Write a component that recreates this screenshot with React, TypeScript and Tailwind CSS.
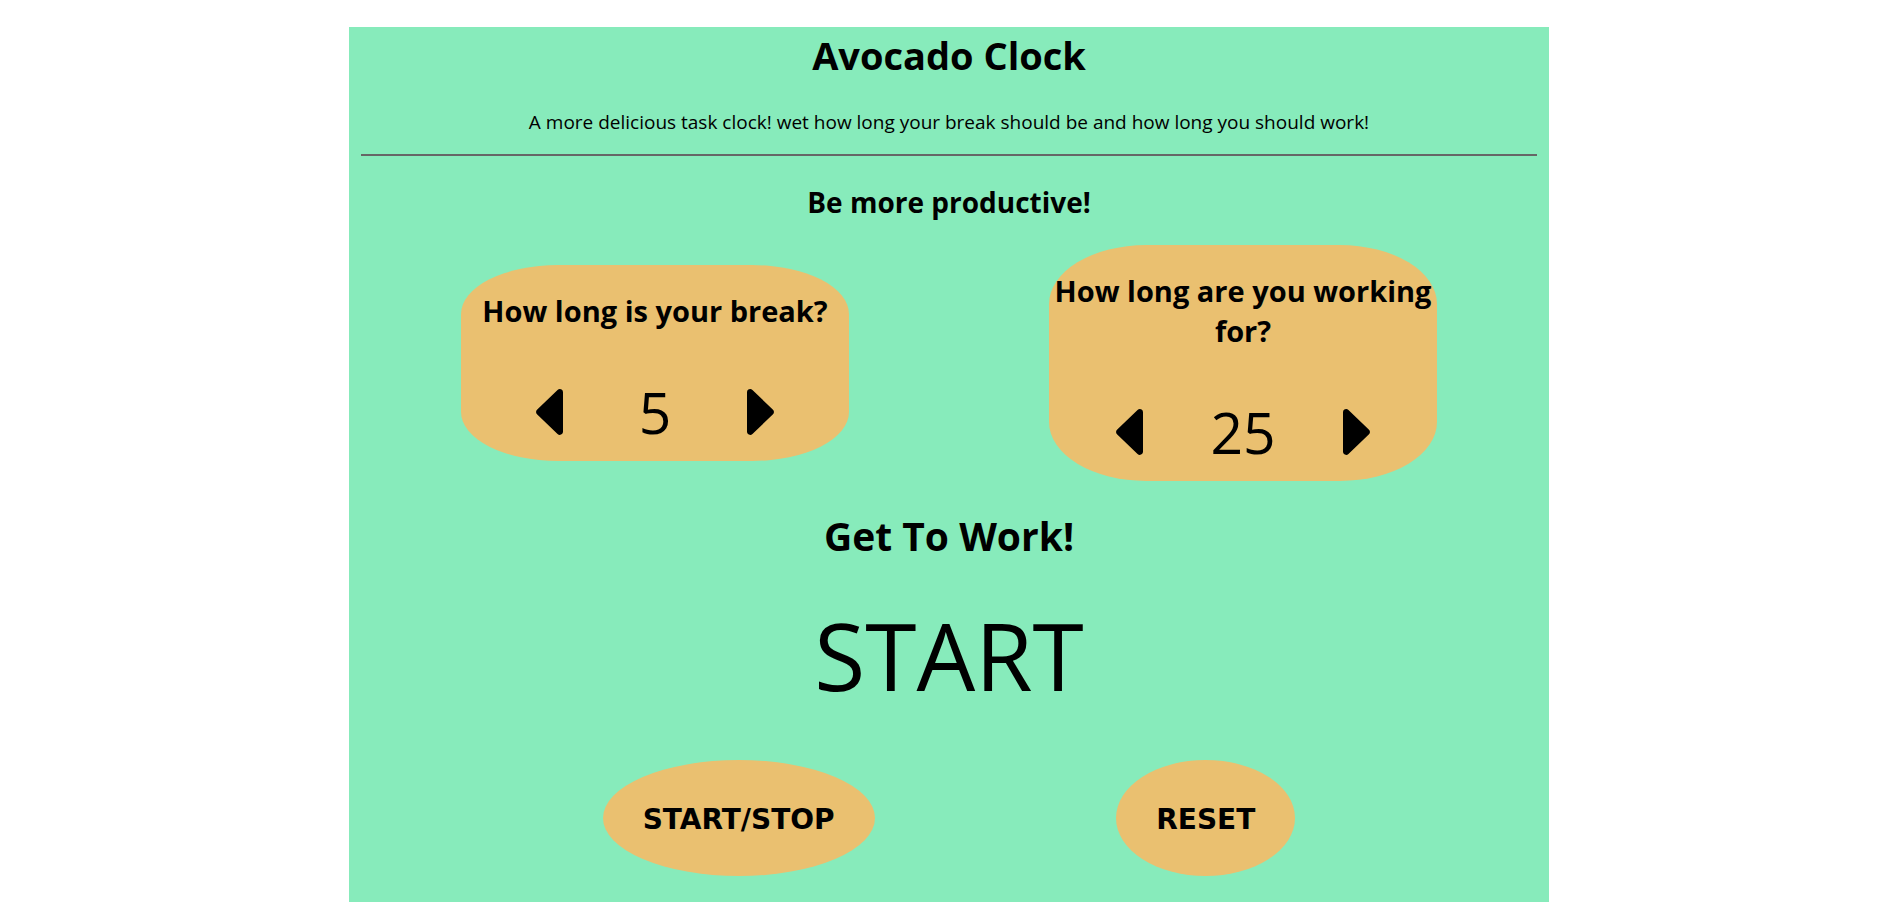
import { useState } from 'react';

const Caret = ({ dir }: { dir: 'left' | 'right' }) => (
  <svg
    viewBox="23 107 169 298"
    width="27"
    height="46"
    preserveAspectRatio="none"
    className={dir === 'right' ? 'rotate-180' : ''}
  >
    <path
      fill="currentColor"
      d="M192 127.338v257.324c0 17.818-21.543 26.741-34.142 14.142L29.196 270.142c-7.81-7.81-7.81-20.474 0-28.284l128.662-128.662c12.599-12.6 34.142-3.676 34.142 14.142z"
    />
  </svg>
);

type SetterProps = {
  label: string;
  value: number;
  onDec: () => void;
  onInc: () => void;
};

const Setter = ({ label, value, onDec, onInc }: SetterProps) => (
  <div className="w-[388px] rounded-[25%] bg-[#eac070] pt-[26px] pb-[19px] flex flex-col items-center">
    <h2 className="text-[29px] leading-[40px] font-bold">{label}</h2>
    <div className="mt-[51px] h-[60px] w-full flex items-center justify-evenly">
      <button onClick={onDec} className="w-[36px] flex items-center justify-center">
        <Caret dir="left" />
      </button>
      <span className="text-[57px] leading-[60px]">{value}</span>
      <button onClick={onInc} className="w-[36px] flex items-center justify-center">
        <Caret dir="right" />
      </button>
    </div>
  </div>
);

export default function App() {
  const [breakLen, setBreakLen] = useState(5);
  const [workLen, setWorkLen] = useState(25);

  return (
    <div className="min-h-screen bg-white pt-[27px] font-['Open_Sans',sans-serif] text-black">
      <div className="w-[1200px] mx-auto bg-[#87ebbb] px-3 pt-[1px] pb-[40px] flex flex-col items-center text-center">
        <h1 className="text-[38px] leading-[54px] font-bold">Avocado Clock</h1>
        <p className="mt-[26px] text-[19px] leading-[28px]">
          A more delicious task clock! wet how long your break should be and how long you should work!
        </p>
        <hr className="mt-[18px] w-full border-0 border-t-2 border-[#666]" />

        <h2 className="mt-[26px] text-[28px] leading-[40px] font-bold">Be more productive!</h2>

        <div className="mt-[23px] w-full flex items-center justify-around">
          <Setter
            label="How long is your break?"
            value={breakLen}
            onDec={() => setBreakLen(Math.max(1, breakLen - 1))}
            onInc={() => setBreakLen(Math.min(60, breakLen + 1))}
          />
          <Setter
            label="How long are you working for?"
            value={workLen}
            onDec={() => setWorkLen(Math.max(1, workLen - 1))}
            onInc={() => setWorkLen(Math.min(60, workLen + 1))}
          />
        </div>

        <h1 className="mt-[28px] text-[39px] leading-[54px] font-bold">Get To Work!</h1>
        <div className="mt-[32px] text-[93px] leading-[120px]">START</div>

        <div className="mt-[45px] w-full flex justify-evenly font-['DejaVu_Sans',sans-serif] font-bold text-[28px]">
          <button className="h-[116px] px-[40px] pt-[4px] rounded-[50%] bg-[#eac070]">START/STOP</button>
          <button className="h-[116px] px-[40px] pt-[4px] rounded-[50%] bg-[#eac070]">RESET</button>
        </div>
      </div>
    </div>
  );
}
